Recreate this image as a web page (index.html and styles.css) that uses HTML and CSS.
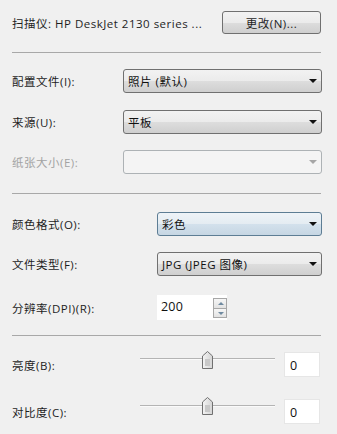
FILE: index.html
```html
<!DOCTYPE html>
<html lang="zh-CN">
<head>
  <meta charset="UTF-8" />
  <title>新扫描</title>
  <link rel="stylesheet" href="styles.css">
</head>
<body>
  <div class="dialog">
    <div class="row scanner">
      <span class="label">扫描仪: HP DeskJet 2130 series ...</span>
      <button class="btn">更改(N)...</button>
    </div>

    <div class="sep sep-1"></div>

    <div class="row row-profile">
      <span class="label">配置文件(I):</span>
      <div class="select wide"><span>照片 (默认)</span><i class="arrow"></i></div>
    </div>
    <div class="row row-source">
      <span class="label">来源(U):</span>
      <div class="select wide"><span>平板</span><i class="arrow"></i></div>
    </div>
    <div class="row row-paper">
      <span class="label disabled">纸张大小(E):</span>
      <div class="select wide is-disabled"><span></span><i class="arrow"></i></div>
    </div>

    <div class="sep sep-2"></div>

    <div class="row row-color">
      <span class="label">颜色格式(O):</span>
      <div class="select narrow is-hover"><span>彩色</span><i class="arrow"></i></div>
    </div>
    <div class="row row-type">
      <span class="label">文件类型(F):</span>
      <div class="select narrow"><span>JPG (JPEG 图像)</span><i class="arrow"></i></div>
    </div>
    <div class="row row-dpi">
      <span class="label">分辨率(DPI)(R):</span>
      <div class="spin">
        <span class="spin-value">200</span>
        <div class="spin-buttons">
          <span class="spin-btn up"></span>
          <span class="spin-btn down"></span>
        </div>
      </div>
    </div>

    <div class="sep sep-3"></div>

    <div class="row row-bright">
      <span class="label">亮度(B):</span>
      <div class="slider">
        <div class="track"></div>
        <svg class="thumb" width="11" height="18" viewBox="0 0 11 18">
          <defs>
            <linearGradient id="tg1" x1="0" y1="0" x2="1" y2="0">
              <stop offset="0" stop-color="#f4f4f4"/>
              <stop offset="1" stop-color="#d4d4d4"/>
            </linearGradient>
          </defs>
          <path d="M0.5 17.5 V5 L5.5 0.5 L10.5 5 V17.5 Z" fill="url(#tg1)" stroke="#707070" stroke-linejoin="round"/>
          <rect x="3" y="8" width="5" height="7" fill="#c8c8c8"/>
        </svg>
      </div>
      <span class="num-box">0</span>
    </div>
    <div class="row row-contrast">
      <span class="label">对比度(C):</span>
      <div class="slider">
        <div class="track"></div>
        <svg class="thumb" width="11" height="18" viewBox="0 0 11 18">
          <path d="M0.5 17.5 V5 L5.5 0.5 L10.5 5 V17.5 Z" fill="url(#tg1)" stroke="#707070" stroke-linejoin="round"/>
          <rect x="3" y="8" width="5" height="7" fill="#c8c8c8"/>
        </svg>
      </div>
      <span class="num-box">0</span>
    </div>
  </div>
</body>
</html>
```

FILE: styles.css
```css
body {
  margin: 0;
  padding: 0;
  background-color: #f0f0f0;
  font-family: "Open Sans", "Noto Sans CJK SC", sans-serif;
  font-size: 11.5px;
  letter-spacing: 0.5px;
  color: #1e1e1e;
}

.dialog {
  width: 310px;
  padding: 11px 15px 0 12px;
}

.row {
  display: flex;
  align-items: center;
  height: 24px;
}

.label {
  white-space: nowrap;
}

.label.disabled {
  color: #a3a3a3;
}

/* row spacing */
.scanner { height: 23px; }
.row-profile { margin-top: 16px; }
.row-source { margin-top: 17px; }
.row-paper { margin-top: 16px; }
.row-color { margin-top: 18px; }
.row-type { margin-top: 16px; }
.row-dpi { margin-top: 19px; height: 25px; }
.row-bright { margin-top: 16px; height: 25px; }
.row-contrast { margin-top: 22px; height: 25px; }

.sep {
  height: 0;
  border-top: 1px solid #a8a8a8;
  width: 309px;
}

.sep-1 { margin-top: 18px; }
.sep-2 { margin-top: 19px; }
.sep-3 { margin-top: 15px; }

.btn {
  margin-left: auto;
  margin-right: 1px;
  width: 99px;
  height: 23px;
  padding: 0;
  font: inherit;
  letter-spacing: inherit;
  color: #1e1e1e;
  border: 1px solid #707070;
  border-radius: 3px;
  background: linear-gradient(#f2f2f2 0%, #ebebeb 50%, #dddddd 51%, #cfcfcf 100%);
}

.select {
  position: relative;
  margin-left: auto;
  height: 24px;
  box-sizing: border-box;
  display: flex;
  align-items: center;
  padding-left: 4px;
  border: 1px solid #707070;
  border-radius: 3px;
  background: linear-gradient(#f2f2f2 0%, #ebebeb 50%, #dddddd 51%, #cfcfcf 100%);
  color: #111;
}

.select.wide { width: 199px; }
.select.narrow { width: 165px; }

.select.is-hover {
  border-color: #5d7d94;
  background: linear-gradient(#eef3f7 0%, #e4ecf2 50%, #d3e1ec 51%, #c6d6e3 100%);
}

.select.is-disabled {
  border-color: #adb2b5;
  background: #f4f4f4;
}

.arrow {
  position: absolute;
  right: 4px;
  top: 9px;
  width: 0;
  height: 0;
  border-left: 4px solid transparent;
  border-right: 4px solid transparent;
  border-top: 4px solid #111;
}

.is-disabled .arrow {
  border-top-color: #a6a6a6;
}

.spin {
  margin-left: auto;
  margin-right: 95px;
  width: 70px;
  height: 25px;
  display: flex;
  background: #fff;
}

.spin-value {
  flex: 1;
  padding: 3px 0 0 4px;
  color: #111;
  font-size: 12.5px;
  letter-spacing: 0.2px;
}

.spin-buttons {
  width: 14px;
  display: flex;
  flex-direction: column;
  padding: 3px 0 2px;
}

.spin-btn {
  position: relative;
  flex: 1;
  border: 1px solid #a7a7a7;
  background: linear-gradient(#f6f6f6, #e2e2e2);
}

.spin-btn.down { border-top: none; }

.spin-btn::after {
  content: "";
  position: absolute;
  left: 4px;
  width: 0;
  height: 0;
  border-left: 3px solid transparent;
  border-right: 3px solid transparent;
}

.spin-btn.up::after {
  top: 3px;
  border-bottom: 3px solid #6f8aa0;
}

.spin-btn.down::after {
  top: 3px;
  border-top: 3px solid #6f8aa0;
}

.slider {
  position: relative;
  margin-left: auto;
  width: 135px;
  height: 25px;
}

.track {
  margin-top: 6px;
  height: 1px;
  background: #b4b4b4;
  border-bottom: 1px solid #fafafa;
}

.thumb {
  position: absolute;
  left: 62px;
  top: -1px;
}

.row-contrast .thumb { top: -2px; }

.num-box {
  margin-left: 9px;
  margin-right: 2px;
  width: 36px;
  height: 25px;
  box-sizing: border-box;
  padding: 4px 0 0 5px;
  background: #fff;
  border: 1px solid #e6e6e6;
  color: #111;
  font-size: 12.5px;
}
```
